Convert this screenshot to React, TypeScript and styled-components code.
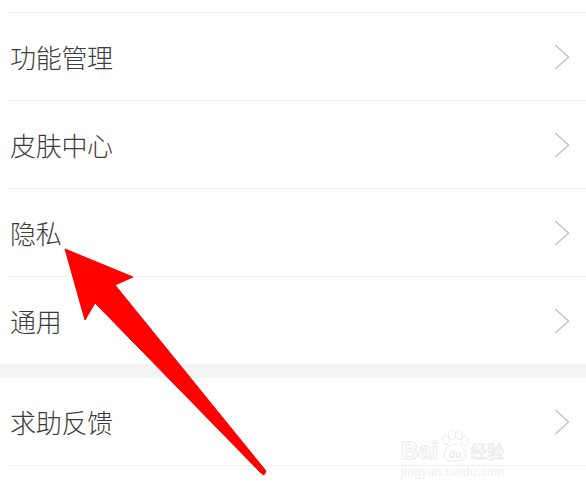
import React from 'react'
import styled, { createGlobalStyle } from 'styled-components'

const GlobalStyle = createGlobalStyle`
  html, body {
    margin: 0;
    padding: 0;
    background: #ffffff;
  }
  body {
    font-family: "Noto Sans CJK SC", "Noto Sans", sans-serif;
  }
`

const Page = styled.div`
  position: relative;
  width: 586px;
  height: 492px;
  overflow: hidden;
  background: #ffffff;
  padding-top: 12px;
  box-sizing: border-box;
`

const Group = styled.div`
  display: flex;
  flex-direction: column;
`

const Row = styled.div<{ first?: boolean; last?: boolean }>`
  display: flex;
  align-items: center;
  justify-content: space-between;
  height: 88px;
  margin-left: 8px;
  padding: 0 16px 0 2px;
  box-sizing: border-box;
  border-top: ${({ first }) => (first ? 'none' : '1px solid #f0f0f0')};
  border-bottom: ${({ last }) => (last ? '1px solid #f0f0f0' : 'none')};
`

const Label = styled.span`
  font-size: 26px;
  font-weight: 300;
  color: #3c3c3c;
  line-height: 1;
  letter-spacing: -0.3px;
`

const Gap = styled.div`
  height: 14px;
  background: #f4f4f4;
`

const Watermark = styled.div`
  position: absolute;
  left: 401px;
  top: 428px;
  display: flex;
  flex-direction: column;
  align-items: flex-start;
  font-family: "Liberation Sans", sans-serif;
`

const MarkTop = styled.div`
  display: flex;
  align-items: flex-end;
  height: 34px;
`

const MarkWord = styled.span`
  font-size: 24px;
  font-weight: bold;
  color: transparent;
  -webkit-text-stroke: 1px #ebebeb;
  line-height: 22px;
`

const MarkCn = styled.span`
  font-family: "Noto Sans CJK SC", sans-serif;
  font-size: 17px;
  color: transparent;
  -webkit-text-stroke: 0.8px #ebebeb;
  line-height: 22px;
`

const MarkUrl = styled.span`
  font-size: 12px;
  color: #efefef;
  margin-top: 3px;
  letter-spacing: 0.4px;
`

const Overlay = styled.svg`
  position: absolute;
  left: 0;
  top: 0;
  pointer-events: none;
`

const Chevron = () => (
  <svg width="16" height="26" viewBox="0 0 16 26">
    <polyline points="1.5,1 14.5,13 1.5,25" fill="none" stroke="#c8c8c8" strokeWidth="1.6" />
  </svg>
)

const Paw = () => (
  <svg width="32" height="32" viewBox="0 0 32 32">
    <g fill="none" stroke="#ebebeb" strokeWidth="1">
      <ellipse cx="8" cy="10" rx="3.5" ry="4.5" />
      <ellipse cx="14" cy="5" rx="3.5" ry="4.5" />
      <ellipse cx="21" cy="5" rx="3.5" ry="4.5" />
      <ellipse cx="27" cy="11" rx="3.5" ry="4.5" />
      <path d="M6 26 C6 18 12 14 16.5 14 C21 14 28 18 28 26 C28 30 24 31 17 31 C10 31 6 30 6 26 Z" />
    </g>
    <text x="17" y="28" textAnchor="middle" fontSize="10" fontWeight="bold" fill="#ebebeb" fontFamily="Liberation Sans, sans-serif">du</text>
  </svg>
)

const topItems = ['功能管理', '皮肤中心', '隐私', '通用']

export default function App() {
  return (
    <Page>
      <GlobalStyle />
      <Group>
        {topItems.map((t) => (
          <Row key={t}>
            <Label>{t}</Label>
            <Chevron />
          </Row>
        ))}
      </Group>
      <Gap />
      <Group>
        <Row first last>
          <Label>求助反馈</Label>
          <Chevron />
        </Row>
      </Group>

      <Watermark>
        <MarkTop>
          <MarkWord>Bai</MarkWord>
          <Paw />
          <MarkCn>经验</MarkCn>
        </MarkTop>
        <MarkUrl>jingyan.baidu.com</MarkUrl>
      </Watermark>

      <Overlay width="586" height="492" viewBox="0 0 586 492">
        <polygon
          points="65,249 133,277 115,285 266,471 264,475 261,473 95,303 85,320"
          fill="#fe0000"
          stroke="#fe0000"
          strokeWidth="1"
          strokeLinejoin="round"
        />
      </Overlay>
    </Page>
  )
}
